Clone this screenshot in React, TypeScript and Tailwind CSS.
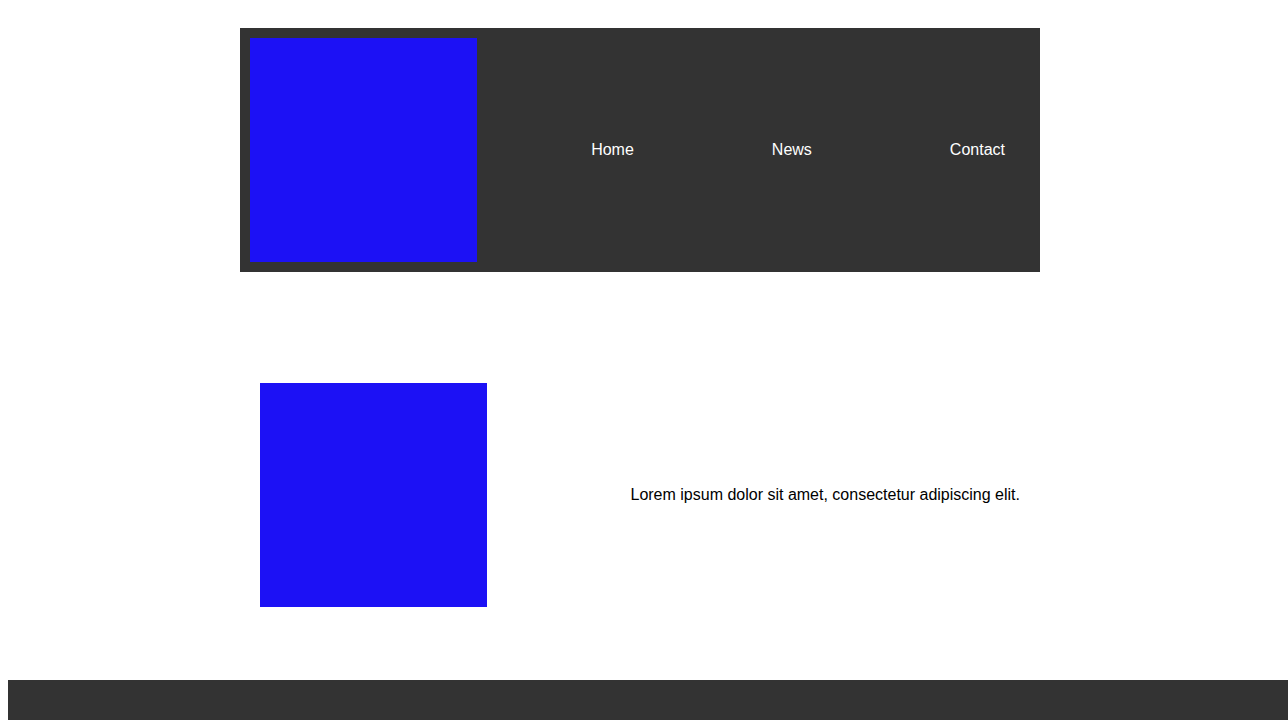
import React from 'react';

const navLinks = ['Home', 'News', 'Contact'];

export default function App() {
  return (
    <div
      className="flex h-[720px] w-[1288px] flex-col overflow-hidden bg-white"
      style={{ fontFamily: '"Liberation Sans", Arial, sans-serif' }}
    >
      <div className="flex w-[1280px] flex-col items-center">
        <header className="mt-[28px] flex h-[244px] w-[800px] items-center bg-[#333333] p-[10px]">
          <div className="h-[224px] w-[227px] shrink-0 bg-[#1c11f5]" />
          <nav className="flex flex-1 items-center justify-end gap-[138px] pr-[25px]">
            {navLinks.map((link) => (
              <a key={link} className="text-base leading-none text-white">
                {link}
              </a>
            ))}
          </nav>
        </header>

        <main className="mt-[91px] flex w-[800px] items-center justify-between p-[20px]">
          <div className="h-[224px] w-[227px] shrink-0 bg-[#1c11f5]" />
          <p className="text-base text-black">
            Lorem ipsum dolor sit amet, consectetur adipiscing elit.
          </p>
        </main>
      </div>

      <footer className="mt-auto ml-[8px] h-[40px] w-[1280px] shrink-0 bg-[#333333]" />
    </div>
  );
}
